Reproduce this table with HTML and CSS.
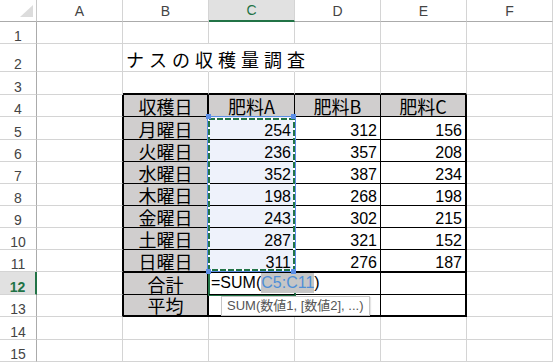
FILE: index.html
```html
<!DOCTYPE html>
<html lang="ja">
<head>
<meta charset="utf-8">
<title>ナスの収穫量調査</title>
<link rel="stylesheet" href="styles.css">
</head>
<body>
<div class="sheet">
  <!-- header row -->
  <div class="c corner"><svg width="36" height="21" viewBox="0 0 36 21"><polygon points="33,5 33,17 20,17" fill="#dcdcdc"/></svg></div>
  <div class="c ch">A</div><div class="c ch">B</div><div class="c ch on">C</div><div class="c ch">D</div><div class="c ch">E</div><div class="c ch">F</div>
  <!-- 1 -->
  <div class="c rh">1</div><div class="c"></div><div class="c"></div><div class="c"></div><div class="c"></div><div class="c"></div><div class="c"></div>
  <!-- 2 -->
  <div class="c rh">2</div><div class="c"></div><div class="c title nr">ナスの収穫量調査</div><div class="c nr"></div><div class="c"></div><div class="c"></div><div class="c"></div>
  <!-- 3 -->
  <div class="c rh">3</div><div class="c"></div><div class="c top"></div><div class="c top"></div><div class="c top"></div><div class="c top"></div><div class="c"></div>
  <!-- 4 -->
  <div class="c rh">4</div><div class="c ta"></div>
  <div class="c t g jp bl br2">収穫日</div><div class="c t g jp">肥料A</div><div class="c t g jp">肥料B</div><div class="c t g jp br2">肥料C</div><div class="c"></div>
  <!-- 5 -->
  <div class="c rh">5</div><div class="c ta"></div>
  <div class="c t g jp bl br2">月曜日</div><div class="c t fill num">254</div><div class="c t num">312</div><div class="c t num br2">156</div><div class="c"></div>
  <!-- 6 -->
  <div class="c rh">6</div><div class="c ta"></div>
  <div class="c t g jp bl br2">火曜日</div><div class="c t fill num">236</div><div class="c t num">357</div><div class="c t num br2">208</div><div class="c"></div>
  <!-- 7 -->
  <div class="c rh">7</div><div class="c ta"></div>
  <div class="c t g jp bl br2">水曜日</div><div class="c t fill num">352</div><div class="c t num">387</div><div class="c t num br2">234</div><div class="c"></div>
  <!-- 8 -->
  <div class="c rh">8</div><div class="c ta"></div>
  <div class="c t g jp bl br2">木曜日</div><div class="c t fill num">198</div><div class="c t num">268</div><div class="c t num br2">198</div><div class="c"></div>
  <!-- 9 -->
  <div class="c rh">9</div><div class="c ta"></div>
  <div class="c t g jp bl br2">金曜日</div><div class="c t fill num">243</div><div class="c t num">302</div><div class="c t num br2">215</div><div class="c"></div>
  <!-- 10 -->
  <div class="c rh">10</div><div class="c ta"></div>
  <div class="c t g jp bl br2">土曜日</div><div class="c t fill num">287</div><div class="c t num">321</div><div class="c t num br2">152</div><div class="c"></div>
  <!-- 11 -->
  <div class="c rh">11</div><div class="c ta"></div>
  <div class="c t g jp bl br2">日曜日</div><div class="c t fill num">311</div><div class="c t num">276</div><div class="c t num br2">187</div><div class="c"></div>
  <!-- 12 -->
  <div class="c rh on">12</div><div class="c ta"></div>
  <div class="c t g jp bl br2 bt">合計</div>
  <div class="c t bt fx"><span class="fxt">=SUM(<span class="ref">C5:C11</span>)</span></div>
  <div class="c t bt"></div><div class="c t bt br2"></div><div class="c"></div>
  <!-- 13 -->
  <div class="c rh">13</div><div class="c ta"></div>
  <div class="c t g jp bl br2 bb2">平均</div><div class="c t bb2"></div><div class="c t bb2"></div><div class="c t bb2 br2"></div><div class="c"></div>
  <!-- 14 -->
  <div class="c rh">14</div><div class="c"></div><div class="c"></div><div class="c"></div><div class="c"></div><div class="c"></div><div class="c"></div>
  <!-- 15 -->
  <div class="c rh">15</div><div class="c"></div><div class="c"></div><div class="c"></div><div class="c"></div><div class="c"></div><div class="c"></div>

  <!-- overlays -->
  <div class="act"></div>
  <svg class="selbox" width="94" height="162" viewBox="0 0 94 162">
    <rect x="2.5" y="3.5" width="88" height="155" fill="none" stroke="#5b8ee6" stroke-width="1"/>
    <rect x="4" y="6" width="85" height="151" fill="none" stroke="#ffffff" stroke-width="2"/>
    <rect x="4" y="6" width="85" height="151" fill="none" stroke="#217346" stroke-width="2" stroke-dasharray="6 2"/>
    <rect x="1" y="1" width="5" height="5" fill="#5b8ee6"/>
    <rect x="86" y="1" width="5" height="5" fill="#5b8ee6"/>
    <rect x="1" y="156" width="5" height="5" fill="#5b8ee6"/>
    <rect x="86" y="156" width="5" height="5" fill="#5b8ee6"/>
  </svg>
  <div class="tip">SUM(数値1, [数値2], ...)</div>
</div>
</body>
</html>
```
FILE: styles.css
```css
* { box-sizing: border-box; }
html, body { margin: 0; padding: 0; background: #fff; }
body {
  width: 553px;
  height: 362px;
  overflow: hidden;
  font-family: "Liberation Sans", "Noto Sans CJK JP", sans-serif;
  color: #000;
}
.sheet {
  position: relative;
  display: grid;
  grid-template-columns: 37px repeat(6, 86px);
  grid-template-rows: 22px 22px 28px 23px 22px 23px 22px 22px 22px 22px 22px 22px 23px 22px 23px 22px;
}
.c {
  border-right: 1px solid #d4d4d4;
  border-bottom: 1px solid #d4d4d4;
  display: flex;
  align-items: flex-end;
  white-space: nowrap;
  min-width: 0;
}
.corner {
  border-bottom-color: #ababab;
  border-right-color: #c8c8c8;
  align-items: flex-start;
}
.corner svg { display: block; }
.ch {
  border-bottom-color: #ababab;
  align-items: center;
  justify-content: center;
  font-size: 14px;
  line-height: 14px;
  color: #444;
}
.ch.on {
  background: #e1e1e1;
  border-bottom: 2px solid #217346;
  color: #217346;
}
.rh {
  border-right-color: #ababab;
  justify-content: center;
  font-size: 14px;
  line-height: 14px;
  color: #444;
}
.rh.on {
  background: #e1e1e1;
  border-right: 2px solid #217346;
  color: #217346;
  font-weight: bold;
}
.nr { border-right-color: transparent; }
.title {
  font-family: "Noto Sans CJK JP", sans-serif;
  font-size: 18px;
  line-height: 20px;
  letter-spacing: 5px;
  padding: 0 0 2px 3px;
}
.top { border-bottom: 2px solid #000; }
.ta { border-right-color: #000; }
.t { border-right-color: #000; border-bottom-color: #000; }
.g { background: #d0cece; }
.bl { border-left: 1px solid #000; }
.br2 { border-right-width: 2px; }
.bt { border-top: 1px solid #000; }
.bb2 { border-bottom-width: 2px; }
.jp {
  font-family: "Noto Sans CJK JP", sans-serif;
  font-size: 18px;
  line-height: 20px;
  justify-content: center;
}
.num {
  justify-content: flex-end;
  padding-right: 3px;
  font-size: 16px;
  line-height: 16px;
}
.fill { background: #eef2fb; }
.fx {
  position: relative;
  z-index: 2;
  padding-left: 2px;
  align-items: flex-start;
  border-right-color: transparent;
  font-size: 16px;
  line-height: 20px;
}
.fxt { display: block; }
.ref {
  display: inline-block;
  height: 20px;
  background: #c6c6c6;
  color: #4f8fd6;
}
.act {
  position: absolute;
  left: 208px;
  top: 270px;
  width: 88px;
  height: 26px;
  border: 2px solid #217346;
  z-index: 1;
}
.selbox {
  position: absolute;
  left: 205px;
  top: 113px;
  z-index: 3;
}
.tip {
  position: absolute;
  left: 221px;
  top: 296px;
  width: 149px;
  height: 20px;
  background: #fff;
  border: 1px solid #c6c6c6;
  box-shadow: 1px 1px 1px rgba(0, 0, 0, 0.1);
  font-size: 13px;
  line-height: 18px;
  color: #555;
  padding-left: 5px;
  z-index: 4;
}
```
